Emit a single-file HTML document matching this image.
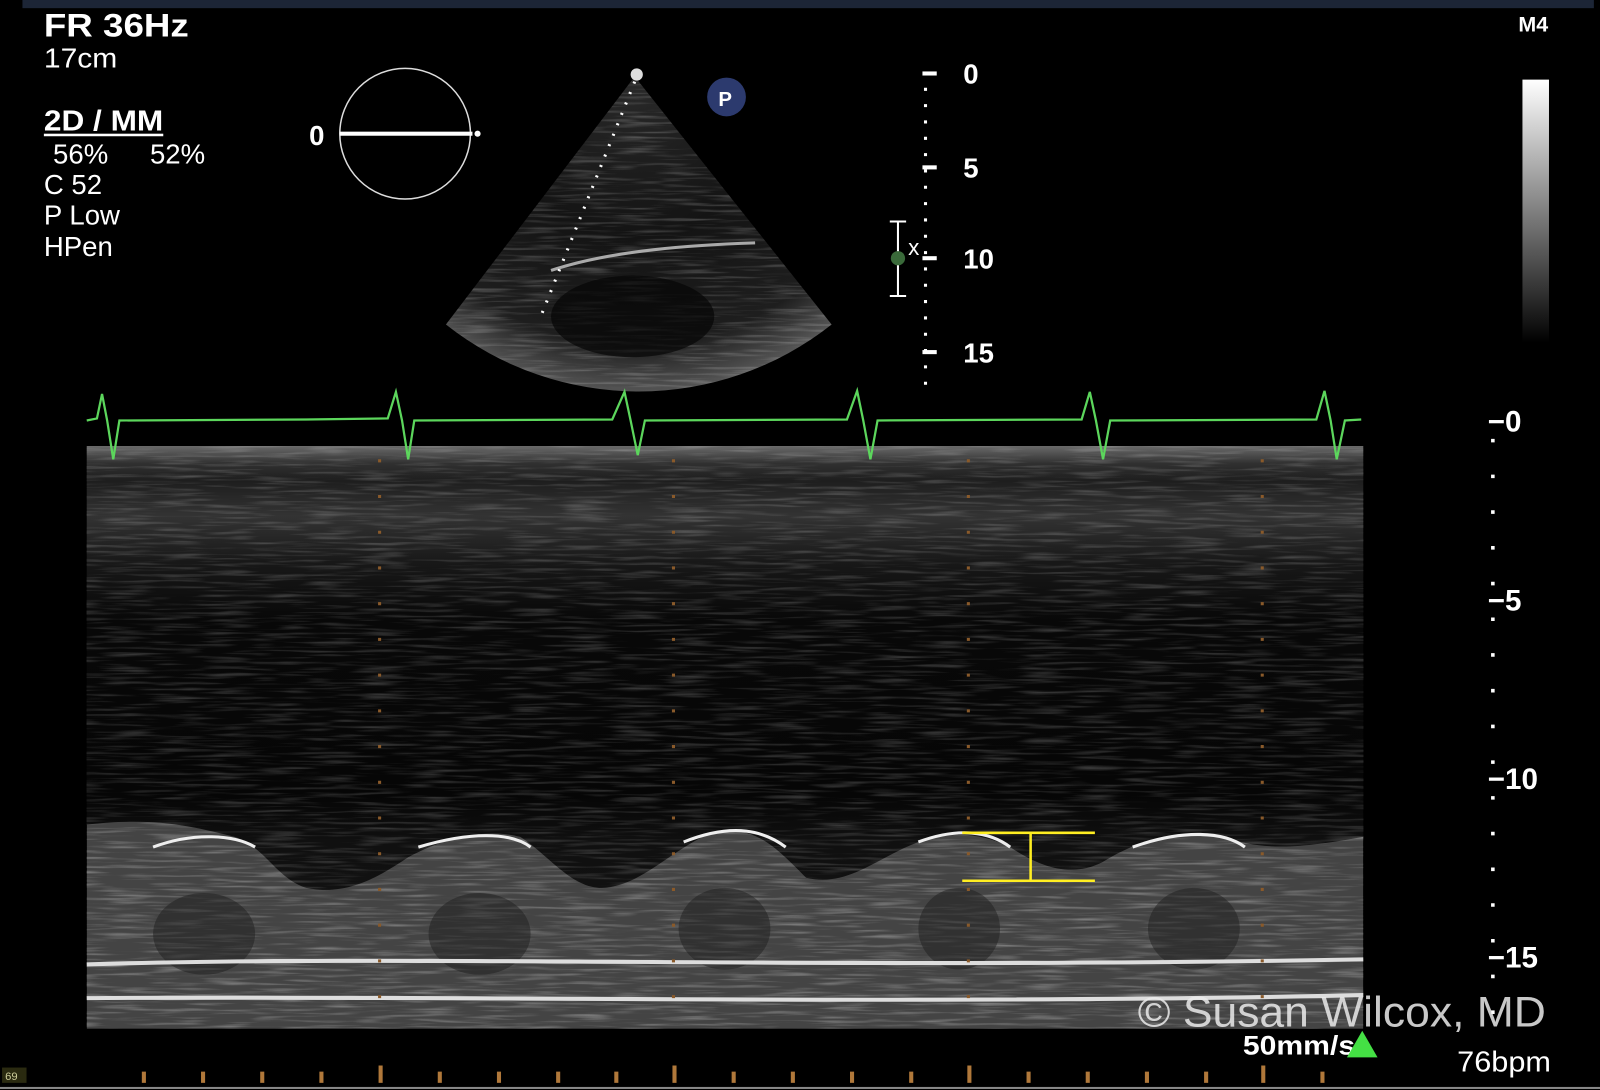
<!DOCTYPE html>
<html><head><style>
html,body{margin:0;padding:0;background:#000;width:1600px;height:1090px;overflow:hidden}
svg{display:block}
text{font-family:"Liberation Sans",sans-serif;fill:#fff}
</style></head><body>
<svg width="1600" height="1090" viewBox="0 0 1568 1068" preserveAspectRatio="none">
<defs>
<filter id="spk" x="0" y="0" width="100%" height="100%">
<feTurbulence type="fractalNoise" baseFrequency="0.02 0.35" numOctaves="2" seed="3"/>
<feColorMatrix type="matrix" values="0 0 0 0 1  0 0 0 0 1  0 0 0 0 1  1.6 0 0 0 -0.75"/>
</filter>
<clipPath id="fc"><path d="M622 75 L437 318 A305 305 0 0 0 815 318 Z"/></clipPath>
<clipPath id="wc"><path d="M85 808 C150 800 190 810 230 820 C260 830 270 860 300 870 C340 878 370 860 400 840 C440 818 480 812 510 820 C540 840 560 870 590 870 C630 868 660 830 700 815 C740 808 760 830 790 860 C830 870 860 840 900 825 C930 815 960 815 990 830 C1020 850 1050 860 1080 845 C1120 820 1160 812 1200 820 C1240 835 1280 830 1336 820 L1336 1008 L85 1008 Z"/></clipPath>
<linearGradient id="mm" x1="0" y1="0" x2="0" y2="1">
<stop offset="0" stop-color="#6a6a6a"/>
<stop offset="0.03" stop-color="#303030"/>
<stop offset="0.06" stop-color="#1e1e1e"/>
<stop offset="0.12" stop-color="#333"/>
<stop offset="0.2" stop-color="#181818"/>
<stop offset="0.3" stop-color="#080808"/>
<stop offset="0.6" stop-color="#060606"/>
<stop offset="0.68" stop-color="#101010"/>
<stop offset="1" stop-color="#141414"/>
</linearGradient>
<linearGradient id="bar" x1="0" y1="0" x2="0" y2="1">
<stop offset="0" stop-color="#fff"/><stop offset="1" stop-color="#000"/>
</linearGradient>
<radialGradient id="fan" cx="622" cy="75" r="310" gradientUnits="userSpaceOnUse">
<stop offset="0" stop-color="#2a2a2a"/><stop offset="0.5" stop-color="#141414"/><stop offset="0.85" stop-color="#1e1e1e"/><stop offset="1" stop-color="#555"/>
</radialGradient>
</defs>
<rect x="22" y="0" width="1540" height="8" fill="#1c2536"/>
<text x="43" y="36" font-size="32" font-weight="bold" textLength="142" lengthAdjust="spacingAndGlyphs">FR 36Hz</text>
<text x="43" y="66" font-size="27" textLength="72" lengthAdjust="spacingAndGlyphs">17cm</text>
<text x="43" y="128" font-size="28" font-weight="bold" textLength="117" lengthAdjust="spacingAndGlyphs">2D / MM</text>
<rect x="43" y="131" width="117" height="2.5" fill="#fff"/>
<text x="52" y="160" font-size="27">56%</text><text x="147" y="160" font-size="27">52%</text>
<text x="43" y="190" font-size="27">C 52</text>
<text x="43" y="220" font-size="27">P Low</text>
<text x="43" y="251" font-size="27">HPen</text>
<circle cx="397" cy="131" r="64" fill="none" stroke="#ddd" stroke-width="1.5"/>
<rect x="333" y="129" width="130" height="4" fill="#fff"/>
<circle cx="468" cy="131" r="3" fill="#fff"/>
<text x="303" y="142" font-size="27" font-weight="bold">0</text>
<text x="1488" y="31" font-size="21" font-weight="bold">M4</text>
<rect x="1492" y="78" width="26" height="258" fill="url(#bar)"/>
<path d="M622 75 L437 318 A305 305 0 0 0 815 318 Z" fill="url(#fan)"/>
<g clip-path="url(#fc)"><rect x="430" y="70" width="390" height="320" fill="#fff" filter="url(#spk)" opacity="0.35"/></g>
<path d="M540 265 C600 245 680 240 740 238" stroke="#aaa" stroke-width="3" fill="none"/>
<ellipse cx="620" cy="310" rx="80" ry="40" fill="#050505" opacity="0.7"/>
<line x1="622" y1="80" x2="530" y2="310" stroke="#fff" stroke-width="3" stroke-dasharray="2 9"/>
<circle cx="624" cy="73" r="6" fill="#ddd"/>
<circle cx="712" cy="95" r="19" fill="#2c3a6e"/>
<text x="704" y="104" font-size="20" font-weight="bold" fill="#ccc">P</text>
<line x1="907" y1="70" x2="907" y2="385" stroke="#fff" stroke-width="3" stroke-dasharray="3 13"/>
<g fill="#fff"><rect x="904" y="70" width="14" height="4"/><rect x="904" y="162" width="14" height="4"/><rect x="904" y="251" width="14" height="4"/><rect x="904" y="343" width="14" height="4"/></g>
<g font-size="27" font-weight="bold"><text x="944" y="82">0</text><text x="944" y="174">5</text><text x="944" y="263">10</text><text x="944" y="355">15</text></g>
<path d="M872 217H888M880 217V290M872 290H888" stroke="#fff" stroke-width="2" fill="none"/>
<circle cx="880" cy="253" r="7" fill="#3a6a3a"/>
<text x="890" y="250" font-size="22">x</text>
<rect x="85" y="437" width="1251" height="571" fill="url(#mm)"/>
<rect x="85" y="437" width="1251" height="571" fill="#fff" filter="url(#spk)" opacity="0.3"/>
<g clip-path="url(#wc)"><rect x="85" y="790" width="1251" height="220" fill="#444"/><rect x="85" y="790" width="1251" height="220" fill="#fff" filter="url(#spk)" opacity="0.45"/></g>
<path d="M150 830 C190 815 230 818 250 830 M410 830 C460 815 500 815 520 830 M670 825 C720 805 750 815 770 830 M900 825 C940 810 970 815 990 830 M1110 830 C1160 812 1200 815 1220 830" stroke="#eee" stroke-width="3" fill="none"/>
<g fill="#1e1e1e" opacity="0.5"><ellipse cx="200" cy="915" rx="50" ry="40"/><ellipse cx="470" cy="915" rx="50" ry="40"/><ellipse cx="710" cy="910" rx="45" ry="40"/><ellipse cx="940" cy="910" rx="40" ry="40"/><ellipse cx="1170" cy="910" rx="45" ry="40"/></g>
<path d="M85 945 C400 935 800 950 1336 940 M85 978 C400 975 900 985 1336 975" stroke="#ddd" stroke-width="4" fill="none"/>
<g stroke="#8a5a2a" stroke-width="3" stroke-dasharray="3 32"><line x1="372" y1="450" x2="372" y2="1005"/><line x1="660" y1="450" x2="660" y2="1005"/><line x1="949" y1="450" x2="949" y2="1005"/><line x1="1237" y1="450" x2="1237" y2="1005"/></g>
<path d="M85 412 L95 410 L100 386 L105 412 L111 450 L117 412 L300 411 L380 410 L388 384 L394 412 L400 450 L406 412 L600 411 L612 384 L618 412 L625 446 L632 412 L830 411 L840 383 L846 412 L853 450 L860 412 L1060 411 L1068 384 L1074 412 L1081 450 L1088 412 L1290 411 L1298 383 L1304 412 L1310 450 L1318 412 L1334 411" stroke="#5cd65c" stroke-width="2.2" fill="none"/>
<path d="M943 816H1073M943 863H1073M1010 816V863" stroke="#ffee22" stroke-width="2.5"/>
<line x1="1463" y1="430" x2="1463" y2="1000" stroke="#fff" stroke-width="3.5" stroke-dasharray="3.5 31.5"/>
<g font-size="29" font-weight="bold"><text x="1458" y="423">−0</text><text x="1458" y="598">−5</text><text x="1458" y="773">−10</text><text x="1458" y="948">−15</text></g>
<text x="1115" y="1006" font-size="42" textLength="400" lengthAdjust="spacingAndGlyphs" style="fill:rgba(235,235,235,0.85)">© Susan Wilcox, MD</text>
<text x="1218" y="1033" font-size="26" font-weight="bold" textLength="110" lengthAdjust="spacingAndGlyphs">50mm/s</text>
<path d="M1335 1010L1350 1036H1320Z" fill="#44e044"/>
<text x="1428" y="1050" font-size="28" textLength="92" lengthAdjust="spacingAndGlyphs">76bpm</text>
<g fill="#b0783a">
<rect x="139" y="1050" width="4" height="11"/><rect x="197" y="1050" width="4" height="11"/><rect x="255" y="1050" width="4" height="11"/><rect x="313" y="1050" width="4" height="11"/><rect x="371" y="1044" width="4" height="17"/><rect x="429" y="1050" width="4" height="11"/><rect x="487" y="1050" width="4" height="11"/><rect x="545" y="1050" width="4" height="11"/><rect x="602" y="1050" width="4" height="11"/><rect x="659" y="1044" width="4" height="17"/><rect x="717" y="1050" width="4" height="11"/><rect x="775" y="1050" width="4" height="11"/><rect x="833" y="1050" width="4" height="11"/><rect x="891" y="1050" width="4" height="11"/><rect x="948" y="1044" width="4" height="17"/><rect x="1006" y="1050" width="4" height="11"/><rect x="1064" y="1050" width="4" height="11"/><rect x="1122" y="1050" width="4" height="11"/><rect x="1180" y="1050" width="4" height="11"/><rect x="1236" y="1044" width="4" height="17"/><rect x="1294" y="1050" width="4" height="11"/>
</g>
<rect x="0" y="1065" width="1568" height="2" fill="#888"/>
<rect x="2" y="1046" width="24" height="15" fill="#2a2a10"/>
<text x="5" y="1058" font-size="11" style="fill:#cc9">69</text>
</svg>
</body></html>
